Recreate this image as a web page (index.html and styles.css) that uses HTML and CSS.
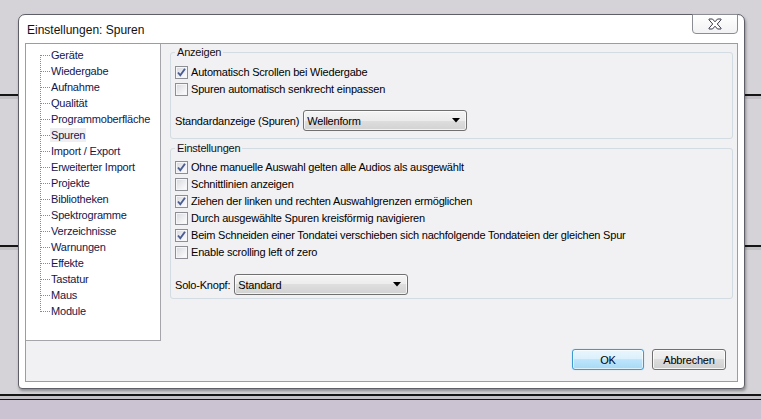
FILE: index.html
```html
<!DOCTYPE html>
<html lang="de">
<head>
    <meta charset="UTF-8">
    <title>Einstellungen: Spuren</title>
    <link rel="stylesheet" href="styles.css">
</head>
<body>
    <div class="dialog">
        <div class="titlebar">
            <span class="title">Einstellungen: Spuren</span>
            <button class="close">
                <svg width="14" height="12" viewBox="0 0 14 12">
                    <polygon points="1,1 4.5,1 7,3.8 9.5,1 13,1 13,1.8 9.3,6 13,10.2 13,11 9.5,11 7,8.2 4.5,11 1,11 1,10.2 4.7,6 1,1.8" fill="#fff" stroke="#3b3b4a" stroke-width="1"/>
                </svg>
            </button>
        </div>
        <div class="client">
            <div class="main">
                <ul class="tree">
                    <li>Geräte</li>
                    <li>Wiedergabe</li>
                    <li>Aufnahme</li>
                    <li>Qualität</li>
                    <li>Programmoberfläche</li>
                    <li class="sel"><span>Spuren</span></li>
                    <li>Import / Export</li>
                    <li>Erweiterter Import</li>
                    <li>Projekte</li>
                    <li>Bibliotheken</li>
                    <li>Spektrogramme</li>
                    <li>Verzeichnisse</li>
                    <li>Warnungen</li>
                    <li>Effekte</li>
                    <li>Tastatur</li>
                    <li>Maus</li>
                    <li>Module</li>
                </ul>
                <div class="pages">
                    <fieldset class="group group-display">
                        <legend>Anzeigen</legend>
                        <label class="check on"><span class="box"><svg width="11" height="11" viewBox="0 0 11 11"><path d="M2 5.5 L4.3 8.3 L9 1.8" fill="none" stroke="#4a5c92" stroke-width="1.9"/></svg></span>Automatisch Scrollen bei Wiedergabe</label>
                        <label class="check"><span class="box"></span>Spuren automatisch senkrecht einpassen</label>
                        <div class="combo-row">
                            <span>Standardanzeige (Spuren)</span>
                            <div class="combo combo-view">
                                <span>Wellenform</span>
                                <svg width="8" height="5" viewBox="0 0 8 5"><polygon points="0,0 8,0 4,4.5" fill="#000"/></svg>
                            </div>
                        </div>
                    </fieldset>
                    <fieldset class="group group-settings">
                        <legend>Einstellungen</legend>
                        <label class="check on"><span class="box"><svg width="11" height="11" viewBox="0 0 11 11"><path d="M2 5.5 L4.3 8.3 L9 1.8" fill="none" stroke="#4a5c92" stroke-width="1.9"/></svg></span>Ohne manuelle Auswahl gelten alle Audios als ausgewählt</label>
                        <label class="check"><span class="box"></span>Schnittlinien anzeigen</label>
                        <label class="check on"><span class="box"><svg width="11" height="11" viewBox="0 0 11 11"><path d="M2 5.5 L4.3 8.3 L9 1.8" fill="none" stroke="#4a5c92" stroke-width="1.9"/></svg></span>Ziehen der linken und rechten Auswahlgrenzen ermöglichen</label>
                        <label class="check"><span class="box"></span>Durch ausgewählte Spuren kreisförmig navigieren</label>
                        <label class="check on"><span class="box"><svg width="11" height="11" viewBox="0 0 11 11"><path d="M2 5.5 L4.3 8.3 L9 1.8" fill="none" stroke="#4a5c92" stroke-width="1.9"/></svg></span>Beim Schneiden einer Tondatei verschieben sich nachfolgende Tondateien der gleichen Spur</label>
                        <label class="check"><span class="box"></span>Enable scrolling left of zero</label>
                        <div class="combo-row solo-row">
                            <span>Solo-Knopf:</span>
                            <div class="combo combo-solo">
                                <span>Standard</span>
                                <svg width="8" height="5" viewBox="0 0 8 5"><polygon points="0,0 8,0 4,4.5" fill="#000"/></svg>
                            </div>
                        </div>
                    </fieldset>
                </div>
            </div>
            <div class="footer">
                <button class="btn btn-ok">OK</button>
                <button class="btn btn-cancel">Abbrechen</button>
            </div>
        </div>
    </div>
</body>
</html>
```

FILE: styles.css
```css
* {
    box-sizing: border-box;
}
body {
    margin: 0;
    width: 761px;
    height: 419px;
    overflow: hidden;
    font-family: "Liberation Sans", Arial, sans-serif;
    font-size: 11px;
    letter-spacing: -0.2px;
    color: #000;
    background: linear-gradient(to bottom,
        #d5d3d7 0, #d5d3d7 94px,
        #151515 94px, #151515 96px,
        #c2c0c4 96px, #c2c0c4 99px,
        #d5d3d7 99px, #d5d3d7 245px,
        #151515 245px, #151515 247px,
        #c2c0c4 247px, #c2c0c4 250px,
        #d5d3d7 250px, #d5d3d7 394px,
        #151515 394px, #151515 396px,
        #c4c2c6 396px, #c4c2c6 399px,
        #151515 399px, #151515 400px,
        #cbc3d1 400px);
}
.dialog {
    display: flex;
    flex-direction: column;
    width: 727px;
    height: 375px;
    margin: 14px 0 0 18px;
    background-color: #fff;
    border: 1px solid #5e5f68;
    border-radius: 7px 7px 4px 4px;
    box-shadow: 1px 2px 3px rgba(0, 0, 0, .35);
}
.titlebar {
    display: flex;
    align-items: flex-start;
    height: 28px;
    padding: 0 6px 0 8px;
}
.title {
    font-size: 12px;
    letter-spacing: 0;
    line-height: 14px;
    margin-top: 8px;
    color: #111;
}
.close {
    display: flex;
    align-items: center;
    justify-content: center;
    margin-left: auto;
    margin-top: -1px;
    width: 46px;
    height: 20px;
    padding: 0;
    border: 1px solid #8c8c94;
    border-radius: 0 0 4px 4px;
    background: linear-gradient(#ffffff, #f2f2f4);
}
.client {
    display: flex;
    flex-direction: column;
    flex: 1;
    margin: 0 6px 6px 6px;
    border: 1px solid #9c9ca2;
    background-color: #f1f0f3;
}
.main {
    display: flex;
    height: 297px;
}
.tree {
    width: 135px;
    margin: 0;
    padding: 3px 0 0 0;
    list-style: none;
    background-color: #fff;
    border-right: 1px solid #a6a6aa;
    border-bottom: 1px solid #a6a6aa;
    background-image: repeating-linear-gradient(to bottom, #8a8a8a 0, #8a8a8a 1px, transparent 1px, transparent 2px);
    background-size: 1px 257px;
    background-position: 14px 11px;
    background-repeat: no-repeat;
}
.tree li {
    height: 16px;
    line-height: 16px;
    padding-left: 25px;
    color: #16164e;
    background-image: repeating-linear-gradient(to right, #8a8a8a 0, #8a8a8a 1px, transparent 1px, transparent 2px);
    background-size: 9px 1px;
    background-position: 15px 8px;
    background-repeat: no-repeat;
}
.tree li.sel span {
    background-color: #efeff1;
    padding: 1px 1px;
    margin-left: -1px;
}
.pages {
    flex: 1;
    padding: 2px 4px 0 9px;
}
.group {
    margin: 0;
    min-width: 0;
    border: 1px solid #d3dce3;
    border-radius: 3px;
}
.group legend {
    padding: 0 2px;
    line-height: 13px;
    color: #111;
}
.group-display {
    padding: 5px 6px 7px 4px;
}
.group-settings {
    margin-top: 3px;
    padding: 4px 6px 3px 4px;
}
.check {
    display: flex;
    align-items: center;
    height: 17px;
    line-height: 17px;
    white-space: nowrap;
}
.check .box {
    display: flex;
    align-items: center;
    justify-content: center;
    width: 13px;
    height: 13px;
    margin-right: 3px;
    border: 1px solid #8e8f94;
    background: linear-gradient(135deg, #d6d8dc, #f4f4f6 70%, #ffffff);
    box-shadow: inset 0 0 0 1px #f6f6f8;
}
.combo-row {
    display: flex;
    align-items: center;
    gap: 4px;
    margin-top: 12px;
}
.solo-row {
    margin-top: 13px;
}
.combo {
    display: flex;
    align-items: center;
    justify-content: space-between;
    height: 21px;
    padding: 0 6px 0 3px;
    border: 1px solid #707070;
    border-radius: 3px;
    background: linear-gradient(#f4f4f4 0, #ececec 50%, #dedede 50%, #d2d2d2 100%);
    box-shadow: inset 0 0 0 1px rgba(255, 255, 255, .7);
}
.combo-view {
    width: 164px;
}
.combo-solo {
    width: 174px;
}
.footer {
    display: flex;
    justify-content: flex-end;
    gap: 8px;
    padding: 8px 11px 0 0;
}
.btn {
    height: 21px;
    padding: 0;
    font-family: "Liberation Sans", Arial, sans-serif;
    font-size: 11px;
    letter-spacing: -0.2px;
    color: #000;
    border: 1px solid #707070;
    border-radius: 3px;
    background: linear-gradient(#f2f2f2 0, #ebebeb 50%, #dddddd 50%, #cfcfcf 100%);
    box-shadow: inset 0 0 0 1px rgba(255, 255, 255, .8);
}
.btn-ok {
    width: 72px;
    border-color: #3d9bd3;
    background: linear-gradient(#eaf6fd 0, #d9f0fc 50%, #bee6fd 50%, #a7d9f5 100%);
    box-shadow: inset 0 0 0 1px rgba(255, 255, 255, .6), 0 0 1px #7fd0f5;
}
.btn-cancel {
    width: 74px;
}
```
